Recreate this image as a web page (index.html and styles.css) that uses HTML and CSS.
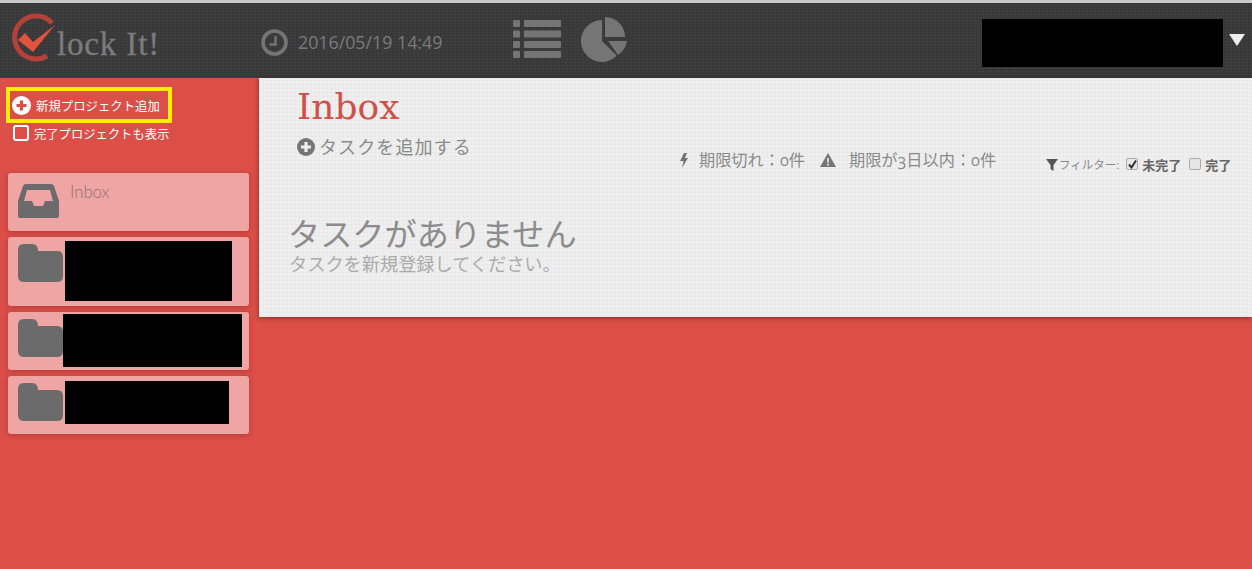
FILE: index.html
```html
<!DOCTYPE html>
<html lang="ja">
<head>
<meta charset="utf-8">
<title>Clock It!</title>
<link rel="stylesheet" href="styles.css">
</head>
<body>
<header class="topbar">
  <div class="logo">
    <svg class="logo-mark" width="48" height="50" viewBox="0 0 48 50">
      <path d="M42 10 A21.500 21.500 0 1 0 37 43" fill="none" stroke="#b5413a" stroke-width="5"/>
      <path d="M8 27 L15 20 L23 29 L45 12 L23 39 Z" fill="#e0533f"/>
    </svg>
    <span class="logo-text">lock It!</span>
  </div>
  <div class="clock">
    <svg width="27" height="27" viewBox="0 0 27 27">
      <circle cx="13.5" cy="13.5" r="11.5" fill="none" stroke="#757575" stroke-width="3.6"/>
      <path d="M14.5 7 V15.5 H8.5" fill="none" stroke="#757575" stroke-width="2.4"/>
    </svg>
    <span class="clock-text">2016/05/19 14:49</span>
  </div>
  <nav class="views">
    <svg width="48" height="38" viewBox="0 0 48 38" fill="#757575">
      <rect x="0" y="0" width="7" height="7" rx="1"/><rect x="11" y="0" width="37" height="7" rx="1"/>
      <rect x="0" y="10.500" width="7" height="7" rx="1"/><rect x="11" y="10.500" width="37" height="7" rx="1"/>
      <rect x="0" y="21" width="7" height="7" rx="1"/><rect x="11" y="21" width="37" height="7" rx="1"/>
      <rect x="0" y="31" width="7" height="7" rx="1"/><rect x="11" y="31" width="37" height="7" rx="1"/>
    </svg>
    <svg width="47" height="46" viewBox="0 0 47 46" fill="#757575">
      <path d="M22 3 V24 L36.800 38.800 A21 21 0 1 1 22 3 Z"/>
      <path d="M25 0 A20 20 0 0 1 45 20 H25 Z"/>
      <path d="M28 24 H47 A21 21 0 0 1 38 38 Z"/>
    </svg>
  </nav>
  <div class="user">
    <div class="redact-user"></div>
    <span class="caret"></span>
  </div>
</header>
<div class="page">
  <aside class="sidebar">
    <div class="add-project">
      <svg width="19" height="19" viewBox="0 0 19 19"><circle cx="9.500" cy="9.500" r="9.500" fill="#fff"/><path d="M9.500 4.500 V14.500 M4.500 9.500 H14.500" stroke="#db4f48" stroke-width="3.2"/></svg>
      <span>新規プロジェクト追加</span>
    </div>
    <label class="show-done">
      <span class="sq"></span>
      <span>完了プロジェクトも表示</span>
    </label>
    <ul class="projects">
      <li class="project inbox">
        <svg width="41" height="34" viewBox="0 0 41 34" fill="#6b6b6b">
          <path fill-rule="evenodd" d="M8 0 H33 Q35 0 36 2 L41 17 V32 Q41 34 39 34 H2 Q0 34 0 32 V17 L5 2 Q6 0 8 0 Z M9 6 L6 17 H14 L16 22 H25 L27 17 H35 L32 6 Z"/>
        </svg>
        <span class="project-name">Inbox</span>
      </li>
      <li class="project p1">
        <svg class="folder" width="45" height="38" viewBox="0 0 45 38"><path d="M6 0 H14 Q20 0 20 7 H39 Q45 7 45 13 V32 Q45 38 39 38 H6 Q0 38 0 32 V6 Q0 0 6 0 Z"/></svg>
        <div class="redact r1"></div>
      </li>
      <li class="project p2">
        <svg class="folder" width="45" height="38" viewBox="0 0 45 38"><path d="M6 0 H14 Q20 0 20 7 H39 Q45 7 45 13 V32 Q45 38 39 38 H6 Q0 38 0 32 V6 Q0 0 6 0 Z"/></svg>
        <div class="redact r2"></div>
      </li>
      <li class="project p3">
        <svg class="folder" width="45" height="38" viewBox="0 0 45 38"><path d="M6 0 H14 Q20 0 20 7 H39 Q45 7 45 13 V32 Q45 38 39 38 H6 Q0 38 0 32 V6 Q0 0 6 0 Z"/></svg>
        <div class="redact r3"></div>
      </li>
    </ul>
  </aside>
  <main class="panel">
    <div class="panel-head">
      <div class="title-block">
        <h1 class="title">Inbox</h1>
        <div class="add-task">
          <svg width="18" height="18" viewBox="0 0 18 18"><circle cx="9" cy="9" r="9" fill="#757575"/><path d="M9 4 V14 M4 9 H14" stroke="#efefef" stroke-width="3.200"/></svg>
          <span>タスクを追加する</span>
        </div>
      </div>
      <div class="stats">
        <svg width="8" height="15" viewBox="0 0 8 15" fill="#757575"><path d="M4 0 H7 L5 5 H8 L2 15 L3.500 8 H0 Z"/></svg>
        <span class="stat-a">期限切れ：0件</span>
        <svg width="16" height="14" viewBox="0 0 16 14"><path d="M8 0 L16 14 H0 Z" fill="#757575"/><path d="M8 5 V9.500 M8 10.500 V12.500" stroke="#efefef" stroke-width="1.600"/></svg>
        <span class="stat-b">期限が3日以内：0件</span>
      </div>
      <div class="filter">
        <svg width="12" height="12" viewBox="0 0 12 12" fill="#555"><path d="M0 0 H12 L7.500 6 V12 L4.500 10 V6 Z"/></svg>
        <span class="filter-label">フィルター:</span>
        <span class="box"><svg width="11" height="11" viewBox="0 0 11 11"><path d="M2 5.500 L4.500 8.500 L9 1.500" fill="none" stroke="#333" stroke-width="2"/></svg></span>
        <b class="opt">未完了</b>
        <span class="box box2"></span>
        <b class="opt">完了</b>
      </div>
    </div>
    <h2 class="empty-title">タスクがありません</h2>
    <p class="empty-sub">タスクを新規登録してください。</p>
  </main>
</div>
</body>
</html>
```
FILE: styles.css
```css
* { box-sizing: border-box; }
html, body { margin: 0; padding: 0; height: 100%; }
body {
  overflow: hidden;
  background: #db4f48;
  font-family: "Open Sans", "Noto Sans CJK JP", sans-serif;
}
.topbar {
  height: 78px;
  display: flex;
  align-items: flex-start;
  border-top: 3px solid #c9c9c9;
  background-color: #3a3a3a;
  background-image:
    repeating-linear-gradient(0deg, rgba(255,255,255,.025) 0 1px, transparent 1px 3px),
    repeating-linear-gradient(90deg, rgba(0,0,0,.07) 0 1px, transparent 1px 4px);
}
.logo { width: 261px; display: flex; align-items: flex-start; padding: 10px 0 0 10px; }
.logo-mark { flex: none; }
.logo-text {
  margin: 13px 0 0 -1px;
  font: 33px/36px "Liberation Serif", serif;
  letter-spacing: .85px;
  color: #7c7c7c;
  -webkit-text-stroke: .3px #7c7c7c;
  white-space: nowrap;
}
.clock { width: 252px; display: flex; align-items: flex-start; padding-top: 26px; }
.clock-text { margin: 0 0 0 10px; font-size: 17.800px; line-height: 26px; color: #7a7a7a; white-space: nowrap; }
.views { width: 469px; display: flex; gap: 19px; padding-top: 14px; align-items: flex-start; }
.views svg:first-child { margin-top: 3px; }
.user { display: flex; align-items: flex-start; padding-top: 16px; }
.redact-user { width: 241px; height: 48px; background: #000; }
.caret {
  margin: 15px 0 0 6px;
  width: 0; height: 0;
  border-left: 8px solid transparent;
  border-right: 8px solid transparent;
  border-top: 12px solid #eee;
}
.page { display: flex; align-items: flex-start; }
.sidebar { width: 259px; flex: none; padding: 9px 0 0 6px; color: #fff; }
.add-project {
  width: 166px; height: 36px;
  border: 4px solid #ffee00;
  display: flex; align-items: center;
  padding-left: 2px;
  font-size: 12.400px;
  white-space: nowrap;
}
.add-project span { margin: 2px 0 0 5px; }
.show-done { display: flex; align-items: center; height: 20px; margin: 1px 0 0 7px; font-size: 12.300px; white-space: nowrap; }
.sq { width: 16px; height: 16px; border: 2px solid #fff; border-radius: 3px; margin: -3px 5px 0 0; }
.projects { list-style: none; margin: 29px 0 0 2px; padding: 0; width: 241px; display: flex; flex-direction: column; gap: 6px; }
.project {
  display: flex; align-items: flex-start;
  padding-left: 10px;
  background: #eea5a3;
  border-radius: 3px;
  box-shadow: 0 1px 5px rgba(130,30,30,.45);
}
.inbox { height: 58px; padding-top: 11px; }
.project-name { margin-left: 11px; margin-top: -2px; font: 300 16.700px/20px Lato, sans-serif; color: #8e7272; }
.folder { fill: #6b6b6b; flex: none; }
.p1 { height: 69px; padding-top: 7px; }
.p2 { height: 58px; padding-top: 7px; }
.p3 { height: 58px; padding-top: 7px; }
.redact { background: #000; }
.r1 { width: 167px; height: 60px; margin: -3px 0 0 2px; }
.r2 { width: 179px; height: 53px; margin: -5px 0 0 0; }
.r3 { width: 164px; height: 43px; margin: -2px 0 0 2px; }
.panel {
  flex: 1;
  height: 239px;
  padding: 0 0 0 30px;
  background-color: #efefef;
  background-image:
    repeating-linear-gradient(0deg, rgba(0,0,0,.018) 0 1px, transparent 1px 4px),
    repeating-linear-gradient(90deg, rgba(0,0,0,.018) 0 1px, transparent 1px 4px);
  box-shadow: 0 1px 5px rgba(60,0,0,.5);
}
.panel-head { display: flex; align-items: flex-start; height: 120px; }
.title-block { width: 391px; padding-left: 8px; }
.title { margin: 8px 0 0; font: 400 36px/42px "DejaVu Serif", serif; color: #d0504a; }
.add-task { display: flex; align-items: center; margin-top: 7px; font-size: 18px; line-height: 24px; letter-spacing: 1.1px; color: #8a8a8a; white-space: nowrap; }
.add-task span { margin-left: 4px; }
.stats { width: 366px; display: flex; align-items: center; padding-top: 72px; font-size: 16.200px; line-height: 20px; color: #8a8a8a; white-space: nowrap; font-variant-numeric: oldstyle-nums; }
.stat-a { margin-left: 11px; margin-right: 15px; }
.stat-b { margin-left: 13px; }
.filter { display: flex; align-items: center; padding-top: 78px; font-size: 13px; line-height: 18px; color: #666; white-space: nowrap; }
.filter svg { flex: none; }
.filter-label { font-size: 11.500px; color: #888; margin: 0 7px 0 1px; }
.box { width: 12px; height: 12px; border: 1px solid #aaa; border-radius: 2px; background: #e6e6e6; margin-right: 4px; display: block; margin-top: -3px; }
.box svg { display: block; }
.box2 { margin-left: 8px; }
.opt { font-weight: 700; }
.empty-title { margin: 15px 0 0 -1px; font: 400 32.200px/38px "Noto Sans CJK JP", sans-serif; color: #8c8c8c; }
.empty-sub { margin: 1px 0 0; font-size: 18.200px; line-height: 24px; color: #ababab; }
```
